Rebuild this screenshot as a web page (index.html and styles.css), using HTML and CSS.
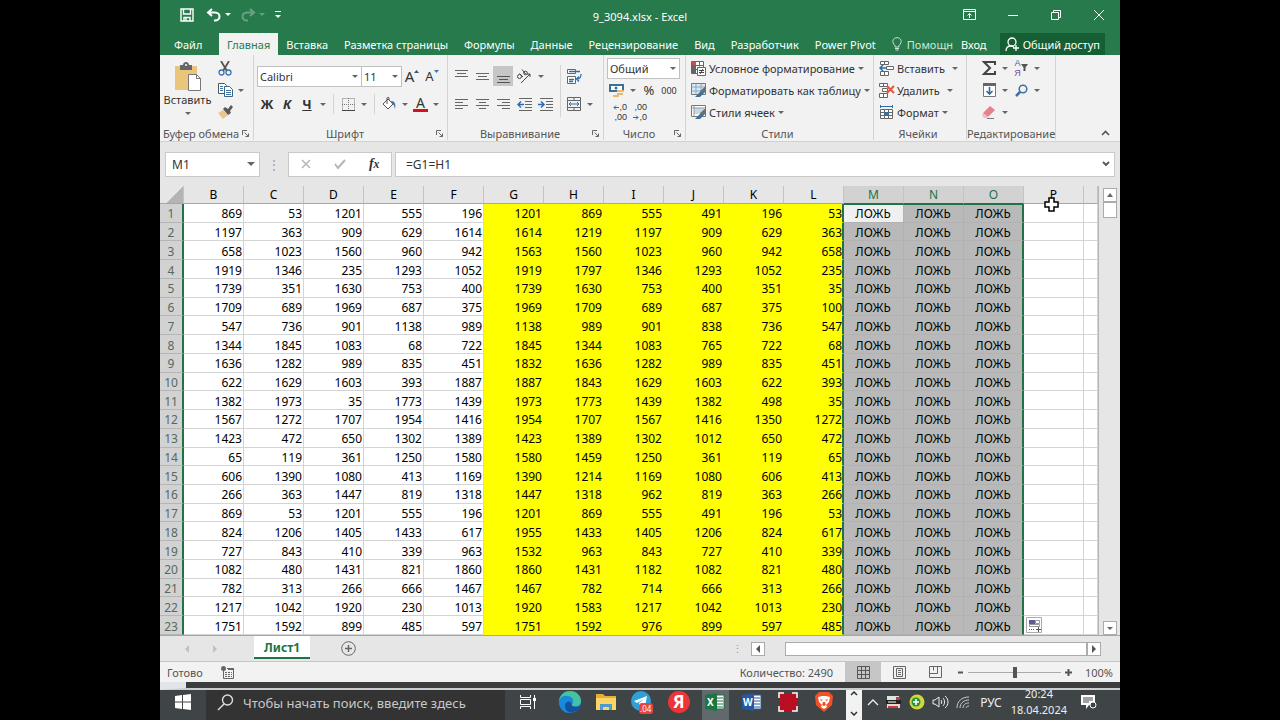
FILE: index.html
```html
<!DOCTYPE html>
<html lang="ru">
<head>
    <meta charset="UTF-8">
    <meta name="viewport" content="width=device-width, initial-scale=1.0">
    <title>9_3094.xlsx - Excel</title>
    <link rel="stylesheet" href="styles.css">
</head>
<body>
    <div class="screen">
        <!-- Заголовок окна -->
        <header class="titlebar">
            <div class="quick">
                <button aria-label="Сохранить"><svg width="14" height="14" viewBox="0 0 14 14" fill="none" stroke="#fff" stroke-width="1.4"><path d="M1 1h12v12H1z M3.500 1v5h7V1 M4 13V9.500h6V13 M6 10v3"/></svg></button>
                <button aria-label="Отменить"><svg width="16" height="14" viewBox="0 0 16 14" fill="none" stroke="#fff" stroke-width="2"><path d="M6 1L2 4.500 6 8 M2 4.500h7c6 0 6 8 0 8H8"/></svg></button>
                <span class="caret light"></span>
                <button class="dim" aria-label="Вернуть"><svg width="16" height="14" viewBox="0 0 16 14" fill="none" stroke="#fff" stroke-width="2"><path d="M10 1l4 3.500L10 8 M14 4.500H7c-6 0-6 8 0 8h1"/></svg></button>
                <span class="caret light dim"></span>
                <button aria-label="Настройка панели"><svg width="8" height="8" viewBox="0 0 8 8" fill="#fff"><path d="M1 0h6v1H1z M1 4h6L4 7z"/></svg></button>
            </div>
            <div class="title">9_3094.xlsx - Excel</div>
            <div class="wincontrols">
                <button aria-label="Параметры ленты"><svg width="13" height="11" viewBox="0 0 13 11" fill="none" stroke="#fff"><path d="M.5.5h12v10H.5z M.5 2.500h12 M6.500 9V4.500 M4.500 6.500l2-2 2 2"/></svg></button>
                <button aria-label="Свернуть"><svg width="10" height="10" viewBox="0 0 10 10" stroke="#fff"><path d="M0 5.500h10"/></svg></button>
                <button aria-label="Окно"><svg width="10" height="10" viewBox="0 0 10 10" fill="none" stroke="#fff"><path d="M.5 2.500h7v7h-7z M2.500 2V.5h7v7H8"/></svg></button>
                <button aria-label="Закрыть"><svg width="10" height="10" viewBox="0 0 10 10" stroke="#fff"><path d="M0 0l10 10 M10 0L0 10"/></svg></button>
            </div>
        </header>

        <!-- Вкладки ленты -->
        <nav class="tabs">
            <a href="#" class="file">Файл</a>
            <a href="#" class="active">Главная</a>
            <a href="#">Вставка</a>
            <a href="#">Разметка страницы</a>
            <a href="#">Формулы</a>
            <a href="#">Данные</a>
            <a href="#">Рецензирование</a>
            <a href="#">Вид</a>
            <a href="#">Разработчик</a>
            <a href="#">Power Pivot</a>
            <a href="#" class="help"><svg width="10" height="14" viewBox="0 0 10 14" fill="none" stroke="#cfe5d8"><path d="M3 10V8.500C-1 5 1 .7 5 .7S11 5 7 8.500V10z M3 11.500h4 M3.500 13h3"/></svg>Помощн</a>
            <a href="#" class="signin">Вход</a>
            <a href="#" class="share"><svg width="15" height="15" viewBox="0 0 15 15" fill="none" stroke="#fff" stroke-width="1.300"><circle cx="7" cy="5" r="4"/><path d="M1 14c0-3 2-5 5-5l3 1 M11 8v6 M8 11h6"/></svg>Общий доступ</a>
        </nav>

        <!-- Лента -->
        <section class="ribbon">
            <div class="group">
                <div class="body clip">
                    <button class="paste">
                        <svg width="28" height="30" viewBox="0 0 28 30"><path d="M1 4h22v24H1z" fill="#ecc57c"/><path d="M6 3h3c0-4 6-4 6 0h3v5H6z" fill="#666"/><circle cx="12" cy="3" r="1" fill="#fff"/><path d="M14.500 12.500h8l4 4v12h-12z" fill="#fff" stroke="#777"/><path d="M22.500 12.500v4h4" fill="none" stroke="#777"/></svg>
                        Вставить
                        <span class="caret"></span>
                    </button>
                    <div class="stack">
                        <div class="line"><button aria-label="Вырезать"><svg width="14" height="15" viewBox="0 0 14 15" fill="none"><path d="M3 0l6 10 M11 0L5 10" stroke="#555" stroke-width="1.800"/><circle cx="3.500" cy="11.500" r="2.500" stroke="#3f74a8" stroke-width="1.300"/><circle cx="10.500" cy="11.500" r="2.500" stroke="#3f74a8" stroke-width="1.300"/></svg></button></div>
                        <div class="line"><button aria-label="Копировать"><svg width="15" height="14" viewBox="0 0 15 14" fill="#fff" stroke="#555"><path d="M.5.5h6l2 2v8h-8z"/><path d="M6.500 3.500h5l3 3v7h-8z" stroke="#3d6385"/><path d="M2 3.500h3 M2 5.500h3 M2 7.500h3 M8 7.500h5 M8 9.500h5 M8 11.500h5" stroke="#3f74a8"/></svg></button><span class="caret"></span></div>
                        <div class="line"><button aria-label="Формат по образцу"><svg width="15" height="14" viewBox="0 0 15 14"><path d="M0 8l5-3 5 5-5 4z" fill="#ecc48c"/><path d="M5 4l2-2 3 2 3-4 2 2-3 4 1 2-3 2z" fill="#595959"/></svg></button></div>
                    </div>
                </div>
                <div class="caption"><span>Буфер обмена</span><svg width="7" height="7" viewBox="0 0 7 7" fill="none" stroke="#666"><path d="M.5 5V.5H5 M2.500 2.500l4 4 M6.500 3.500v3h-3"/></svg></div>
            </div>

            <div class="group">
                <div class="body two">
                    <div class="line">
                        <span class="combo wide"><select aria-label="Шрифт"><option>Calibri</option></select><i class="caret"></i></span>
                        <span class="combo size"><select aria-label="Размер шрифта"><option>11</option></select><i class="caret"></i></span>
                        <button class="grow" aria-label="Увеличить шрифт"><span>A</span><svg width="5" height="12" viewBox="0 0 5 12"><path d="M0 3l2.500-3L5 3z" fill="#44546a"/></svg></button>
                        <button class="grow small" aria-label="Уменьшить шрифт"><span>A</span><svg width="5" height="12" viewBox="0 0 5 12"><path d="M0 0h5L2.500 3z" fill="#3f74a8"/></svg></button>
                    </div>
                    <div class="line">
                        <button class="b">Ж</button><button class="b i">К</button><button class="b u">Ч</button><span class="caret"></span>
                        <span class="vsep"></span>
                        <button aria-label="Границы"><svg width="13" height="13" viewBox="0 0 13 13" fill="none" stroke="#777"><path d="M.5.5h12v12H.5z M6.500 0v13 M0 6.500h13" stroke-dasharray="1 1"/><path d="M0 12.500h13" stroke="#444"/></svg></button><span class="caret"></span>
                        <span class="vsep"></span>
                        <button aria-label="Цвет заливки"><svg width="15" height="14" viewBox="0 0 15 14" fill="none" stroke="#555"><path d="M1 7l5-5 5 5-5 5z" fill="#fff"/><path d="M5 7V1c0-1 2-1 2 0v2"/><path d="M9 4c4 0 5 3 4 8-1-3-1-5-3-5z" fill="#3f74a8" stroke="none"/></svg></button><span class="caret"></span>
                        <button class="color" aria-label="Цвет текста">A</button><span class="caret"></span>
                    </div>
                </div>
                <div class="caption"><span>Шрифт</span><svg width="7" height="7" viewBox="0 0 7 7" fill="none" stroke="#666"><path d="M.5 5V.5H5 M2.500 2.500l4 4 M6.500 3.500v3h-3"/></svg></div>
            </div>

            <div class="group">
                <div class="body split">
                    <div class="two">
                        <div class="line tight">
                            <button aria-label="По верхнему краю"><svg width="13" height="13" viewBox="0 0 13 13" stroke="#666"><path d="M0 .5h13 M2 3.500h9 M0 6.500h13"/></svg></button>
                            <button aria-label="По середине"><svg width="13" height="13" viewBox="0 0 13 13" stroke="#666"><path d="M0 3.500h13 M2 6.500h9 M0 9.500h13"/></svg></button>
                            <button class="on" aria-label="По нижнему краю"><svg width="13" height="13" viewBox="0 0 13 13" stroke="#555"><path d="M0 6.500h13 M2 9.500h9 M0 12.500h13"/></svg></button>
                            <button aria-label="Ориентация"><svg width="16" height="15" viewBox="0 0 16 15" fill="none" stroke="#444"><path d="M5 14L14 5 M11 5h3v3"/><circle cx="3.500" cy="7.500" r="2"/><path d="M3.500 4.500l3.500 3.500 M6 .5l4 5"/><circle cx="9.500" cy="4" r="1.800"/></svg></button><span class="caret"></span>
                        </div>
                        <div class="line tight">
                            <button aria-label="По левому краю"><svg width="13" height="11" viewBox="0 0 13 11" stroke="#666"><path d="M0 .5h13 M0 3.500h8 M0 6.500h13 M0 9.500h8"/></svg></button>
                            <button aria-label="По центру"><svg width="13" height="11" viewBox="0 0 13 11" stroke="#666"><path d="M0 .5h13 M3 3.500h7 M0 6.500h13 M3 9.500h7"/></svg></button>
                            <button aria-label="По правому краю"><svg width="13" height="11" viewBox="0 0 13 11" stroke="#666"><path d="M0 .5h13 M5 3.500h8 M0 6.500h13 M5 9.500h8"/></svg></button>
                            <button aria-label="Уменьшить отступ"><svg width="15" height="13" viewBox="0 0 15 13" fill="none" stroke="#666"><path d="M2 .5h13 M8 3.500h7 M8 6.500h7 M8 9.500h7 M2 12.500h13"/><path d="M7 6.500H1 M4 3.500l-3 3 3 3" stroke="#2f6cab" stroke-width="1.500"/></svg></button>
                            <button aria-label="Увеличить отступ"><svg width="15" height="13" viewBox="0 0 15 13" fill="none" stroke="#666"><path d="M2 .5h13 M8 3.500h7 M8 6.500h7 M8 9.500h7 M2 12.500h13"/><path d="M0 6.500h6 M3 3.500l3 3-3 3" stroke="#2f6cab" stroke-width="1.500"/></svg></button>
                        </div>
                    </div>
                    <span class="vsep tall"></span>
                    <div class="two">
                        <div class="line"><button aria-label="Перенести текст"><svg width="15" height="15" viewBox="0 0 15 15" fill="#fff" stroke="#666"><path d="M.5.5h8v4h-8z M.5 7.500h8v7h-8z"/><path d="M2 2.500h11 M2 10.500h5 M2 12.500h4 M14 5c0 4-1 5-4 5 M12 7.500L9.500 10l2.500 2.500" fill="none" stroke="#2f6cab" stroke-width="1.300"/></svg></button></div>
                        <div class="line"><button aria-label="Объединить"><svg width="14" height="14" viewBox="0 0 14 14" fill="none" stroke="#666"><path d="M.5.5h13v13H.5z M.5 3.500h13 M.5 10.500h13 M7 .5v3 M7 10.500v3"/><path d="M2 7h10 M4 5L2 7l2 2 M10 5l2 2-2 2" stroke="#2f6cab"/></svg></button><span class="caret"></span></div>
                    </div>
                </div>
                <div class="caption"><span>Выравнивание</span><svg width="7" height="7" viewBox="0 0 7 7" fill="none" stroke="#666"><path d="M.5 5V.5H5 M2.500 2.500l4 4 M6.500 3.500v3h-3"/></svg></div>
            </div>

            <div class="group">
                <div class="body three">
                    <div class="line"><span class="combo number"><select aria-label="Числовой формат"><option>Общий</option></select><i class="caret"></i></span></div>
                    <div class="line">
                        <button aria-label="Финансовый формат"><svg width="16" height="15" viewBox="0 0 16 15"><path d="M1 2h13v6H1z" fill="#fff" stroke="#3d7093" stroke-width="2"/><circle cx="7" cy="5" r="1.500" fill="#3d7093"/><path d="M8 7h7v2H8z M8 10h6v2H8z M4 12h6v2H4z" fill="#e8b96b"/></svg></button><span class="caret"></span>
                        <button class="pct">%</button><button class="zeros">000</button>
                    </div>
                    <div class="line">
                        <button class="dec" aria-label="Увеличить разрядность"><span><svg width="6" height="5" viewBox="0 0 6 5" fill="none" stroke="#2f6cab"><path d="M6 2.500H1 M3 .5l-2 2 2 2"/></svg>,0</span><span>,00</span></button>
                        <button class="dec" aria-label="Уменьшить разрядность"><span>,00</span><span><svg width="6" height="5" viewBox="0 0 6 5" fill="none" stroke="#2f6cab"><path d="M0 2.500h5 M3 .5l2 2-2 2"/></svg>,0</span></button>
                    </div>
                </div>
                <div class="caption"><span>Число</span><svg width="7" height="7" viewBox="0 0 7 7" fill="none" stroke="#666"><path d="M.5 5V.5H5 M2.500 2.500l4 4 M6.500 3.500v3h-3"/></svg></div>
            </div>

            <div class="group">
                <div class="body three">
                    <div class="line"><button class="cmd"><svg width="16" height="15" viewBox="0 0 16 15"><path d="M.5.5h12v12H.5z M.5 4.500h12 M.5 8.500h6 M4.500.5v12 M8.500.5v5" fill="#fff" stroke="#666"/><path d="M1 1h4v3H1z" fill="#c5544a"/><path d="M1 5h3v7H1z" fill="#666"/><path d="M6.500 6.500h8v8h-8z" fill="#fff" stroke="#666"/><path d="M8 9.500h5 M8 11.500h5 M12 8l-3 5" stroke="#444"/></svg>Условное форматирование<span class="caret"></span></button></div>
                    <div class="line"><button class="cmd"><svg width="16" height="15" viewBox="0 0 16 15"><path d="M.5.5h14v11H.5z" fill="#d9e8f4" stroke="#777"/><path d="M.5 4h14 M.5 8h14 M5 .5v11 M10 .5v11" stroke="#86a9c6"/><path d="M15 3v5l-6 6H4l4-4z" fill="#3d6f99"/><path d="M15 3v4l-4 3-2-2z" fill="#707070"/></svg>Форматировать как таблицу<span class="caret"></span></button></div>
                    <div class="line"><button class="cmd"><svg width="16" height="15" viewBox="0 0 16 15"><path d="M.5.5h14v11H.5z" fill="#fff" stroke="#777"/><path d="M3 3h10v6H3z" fill="#c2d9ea"/><path d="M.5 3h14 M3 .5v11" stroke="#999"/><path d="M15 3v5l-6 6H4l4-4z" fill="#3d6f99"/><path d="M15 3v4l-4 3-2-2z" fill="#707070"/></svg>Стили ячеек<span class="caret"></span></button></div>
                </div>
                <div class="caption"><span>Стили</span></div>
            </div>

            <div class="group">
                <div class="body three">
                    <div class="line"><button class="cmd cells"><svg width="16" height="15" viewBox="0 0 16 15" fill="#fff" stroke="#666"><path d="M1.500.5h8v3h-8z M5.500.5v3 M1.500 10.500h8v4h-8z M5.500 10.500v4 M7.500 5.500h7v3h-7z"/><path d="M8 7H1 M4 4L1 7l3 3" fill="none" stroke="#2f6cab" stroke-width="1.500"/></svg>Вставить<span class="caret far"></span></button></div>
                    <div class="line"><button class="cmd cells"><svg width="16" height="15" viewBox="0 0 16 15" fill="#fff" stroke="#666"><path d="M.5.5h8v3h-8z M4.500.5v3 M.5 10.500h8v4h-8z M4.500 10.500v4 M3.500 5.500h5v3h-5z"/><path d="M8 3l7 7 M15 3l-7 7" fill="none" stroke="#dd5b3e" stroke-width="2"/></svg>Удалить<span class="caret far"></span></button></div>
                    <div class="line"><button class="cmd cells"><svg width="16" height="15" viewBox="0 0 16 15" fill="#fff" stroke="#666"><path d="M1.500 4.500h12v9h-12z M1.500 7.500h12 M1.500 10.500h12 M5.500 4.500v9 M9.500 4.500v9"/><path d="M5 7h5v4H5z" fill="#3d6f99" stroke="none"/><path d="M1 1.500h13 M1.500 0v3 M13.500 0v3" stroke="#2f6cab"/></svg>Формат<span class="caret"></span></button></div>
                </div>
                <div class="caption"><span>Ячейки</span></div>
            </div>

            <div class="group">
                <div class="body three edit">
                    <div class="line">
                        <button aria-label="Сумма"><svg width="15" height="14" viewBox="0 0 15 14" fill="none" stroke="#444" stroke-width="2"><path d="M13 4V1H2l6 6-6 6h11v-3"/></svg></button><span class="caret"></span>
                        <button class="sort"><span>А<br><b>Я</b></span><svg width="7" height="8" viewBox="0 0 7 8" fill="#555"><path d="M0 0h7L4.500 3.500V7h-2V3.500z"/></svg></button><span class="caret"></span>
                    </div>
                    <div class="line">
                        <button aria-label="Заполнить"><svg width="13" height="14" viewBox="0 0 13 14" fill="none"><path d="M.5.5h12v13H.5z" fill="#fff" stroke="#777"/><path d="M0 0h13v3H0z" fill="#666"/><path d="M6.500 4v7 M3.500 8l3 3 3-3" stroke="#2f6cab" stroke-width="1.600"/></svg></button><span class="caret"></span>
                        <button aria-label="Найти"><svg width="13" height="13" viewBox="0 0 13 13" fill="none" stroke="#3d70a0"><circle cx="8" cy="5" r="3.800" stroke-width="1.500"/><path d="M5 8l-4 4" stroke-width="2.500"/></svg></button><span class="caret"></span>
                    </div>
                    <div class="line">
                        <button aria-label="Очистить"><svg width="14" height="13" viewBox="0 0 14 13"><path d="M8 0l5 4-7 7-5-4z" fill="#e4828e"/><path d="M1 7l5 4-1 1H2L0 9z" fill="#f3b9bf"/><path d="M5 12.500h7" stroke="#777"/></svg></button><span class="caret"></span>
                    </div>
                </div>
                <div class="caption"><span>Редактирование</span></div>
            </div>
            <div class="group last"><button aria-label="Свернуть ленту"><svg width="9" height="6" viewBox="0 0 9 6" fill="none" stroke="#555" stroke-width="1.600"><path d="M1 5l3.500-3.500L8 5"/></svg></button></div>
        </section>

        <!-- Строка формул -->
        <section class="formulabar">
            <span class="namebox"><input type="text" value="M1" aria-label="Имя ячейки"><i class="caret big"></i></span>
            <span class="dots">⋮</span>
            <span class="fxbox">
                <button aria-label="Отмена"><svg width="10" height="10" viewBox="0 0 10 10" stroke="#b5b5b5" stroke-width="1.500"><path d="M1 1l8 8 M9 1L1 9"/></svg></button>
                <button aria-label="Ввод"><svg width="12" height="10" viewBox="0 0 12 10" fill="none" stroke="#b5b5b5" stroke-width="2"><path d="M1 5l3 4 7-8"/></svg></button>
                <button class="fx">f<small>x</small></button>
            </span>
            <span class="formula"><input type="text" value="=G1=H1" aria-label="Формула"><svg width="8" height="6" viewBox="0 0 8 6" fill="none" stroke="#555" stroke-width="1.800"><path d="M1 1l3 3 3-3"/></svg></span>
        </section>

        <!-- Лист -->
        <main class="sheet">
            <table class="grid">
                <colgroup><col class="rowcol"><col span="15" class="datacol"><col></colgroup>
                <thead><tr id="letters"></tr></thead>
                <tbody id="cells"></tbody>
            </table>
            <div class="vscroll">
                <button aria-label="Вверх"><i class="caret up"></i></button>
                <span class="thumb"></span>
                <button class="down" aria-label="Вниз"><i class="caret"></i></button>
            </div>
        </main>

        <div class="sheetbar">
            <div class="sheetnav"><i class="arrow left pale"></i><i class="arrow pale"></i></div>
            <a href="#" class="sheettab">Лист1</a>
            <button class="add" aria-label="Новый лист"><svg width="15" height="15" viewBox="0 0 15 15" fill="none" stroke="#666"><circle cx="7.500" cy="7.500" r="6.800"/><path d="M7.500 4v7 M4 7.500h7" stroke-width="1.500"/></svg></button>
            <span class="dots">⋮</span>
            <div class="hscroll">
                <button aria-label="Влево"><i class="arrow left"></i></button>
                <span class="thumb"></span>
                <button aria-label="Вправо"><i class="arrow"></i></button>
            </div>
        </div>

        <footer class="status">
            <span>Готово</span>
            <svg width="13" height="13" viewBox="0 0 13 13" fill="none" stroke="#666"><path d="M2.500 4v8.500h10v-10H6"/><path d="M7 3h6" stroke-width="2"/><path d="M4 6.500h7 M4 8.500h7 M4 10.500h7" stroke-dasharray="2 1"/><circle cx="2.500" cy="2.500" r="2.500" fill="#666" stroke="none"/></svg>
            <span class="count">Количество: 2490</span>
            <button class="view on" aria-label="Обычный"><svg width="13" height="13" viewBox="0 0 13 13" fill="none" stroke="#555"><path d="M.5.5h12v12H.5z M.5 4.500h12 M.5 8.500h12 M4.500.5v12 M8.500.5v12"/></svg></button>
            <button class="view" aria-label="Разметка страницы"><svg width="13" height="13" viewBox="0 0 13 13" fill="none" stroke="#666"><path d="M.5.5h12v12H.5z M3.500 2.500h6v8h-6z M5 4.500h3 M5 6.500h3 M5 8.500h3"/></svg></button>
            <button class="view" aria-label="Страничный режим"><svg width="13" height="12" viewBox="0 0 13 12" fill="none" stroke="#666"><path d="M.5.5h12v11H.5z M.5 7.500h8v-7 M4.500.5v4"/></svg></button>
            <svg class="sign" width="7" height="7" viewBox="0 0 7 7" stroke="#555" stroke-width="2"><path d="M1 3.500h5"/></svg>
            <input type="range" class="zoom" min="0" max="100" value="50" aria-label="Масштаб">
            <svg class="sign" width="7" height="7" viewBox="0 0 7 7" stroke="#555" stroke-width="2"><path d="M0 3.500h7 M3.500 0v7"/></svg>
            <span class="percent">100%</span>
        </footer>

        <div class="behind"></div>

        <!-- Панель задач -->
        <div class="taskbar">
            <button class="start" aria-label="Пуск"><svg width="16" height="16" viewBox="0 0 16 16" fill="#fff"><path d="M0 2l7-1v6.500H0z M8 1l8-1v7.500H8z M0 8.500h7V15l-7-1z M8 8.500h8V16l-8-1z"/></svg></button>
            <label class="search"><svg width="17" height="17" viewBox="0 0 17 17" fill="none" stroke="#ddd" stroke-width="1.400"><circle cx="10.500" cy="6" r="5"/><path d="M7 10l-6 6"/></svg><input type="text" placeholder="Чтобы начать поиск, введите здесь"></label>
            <div class="apps">
                <button aria-label="Представление задач"><svg width="16" height="14" viewBox="0 0 16 14" fill="none" stroke="#fff"><path d="M.5 0v2.500h10V0 M.5 4.500h10v5H.5z M.5 14v-2.500h10V14 M14.500 0v14"/><path d="M13 3h3v3h-3z" fill="#fff" stroke="none"/></svg></button>
                <button aria-label="Edge"><svg width="24" height="24" viewBox="0 0 24 24"><circle cx="12" cy="12" r="11" fill="#1b78c9"/><path d="M1 11C2 4 7 1 12 1c7 0 11 5 11 10 0 4-3 6-8 5-2-1-1-2 0-3 0-4-8-7-14-2z" fill="#45c3a0"/><path d="M1 12C2 5 10 4 14 8c2 2 1 5 0 6-1-4-6-3-7 1-1 3 2 7 5 8C5 23 1 18 1 12z" fill="#1889dc"/><path d="M7 15c1-4 5-4 6-2 0 4 4 5 9 3-2 5-7 7-11 6-3-1-4-4-4-7z" fill="#14529c"/></svg></button>
                <button class="run" aria-label="Проводник"><svg width="20" height="18" viewBox="0 0 20 18"><path d="M0 1h7l2 2h11v14H0z" fill="#e8ad36"/><path d="M0 5h20v12H0z" fill="#fbd667"/><path d="M4 17v-6h12v6h-3v-3H7v3z" fill="#4b9bd1"/></svg></button>
                <button class="run" aria-label="Telegram"><svg width="24" height="24" viewBox="0 0 24 24"><circle cx="11" cy="11" r="10" fill="#2f9fd8"/><path d="M4 11l13-5-2 11-4-3-2 2v-3l5-4-7 4z" fill="#fff"/><rect x="9" y="13" width="14" height="11" rx="3" fill="#e8463c"/><text x="10" y="22" class="badge">.04</text></svg></button>
                <button aria-label="Яндекс"><svg width="24" height="24" viewBox="0 0 24 24"><circle cx="12" cy="12" r="11" fill="#ee3437"/><text x="6" y="18" class="ya">Я</text></svg></button>
                <button class="run current" aria-label="Excel"><svg width="20" height="18" viewBox="0 0 20 18"><path d="M10 2h9v14h-9z" fill="#fff" stroke="#217346"/><path d="M12 5h6 M12 8h6 M12 11h6 M12 14h6" stroke="#217346"/><path d="M0 2l12-2v18L0 16z" fill="#1b7742"/><text x="2" y="13" class="letter">X</text></svg></button>
                <button class="run" aria-label="Word"><svg width="20" height="18" viewBox="0 0 20 18"><path d="M10 2h9v14h-9z" fill="#fff" stroke="#2b579a"/><path d="M12 5h6 M12 8h6 M12 11h6 M12 14h6" stroke="#2b579a"/><path d="M0 2l12-2v18L0 16z" fill="#24599f"/><text x="1" y="13" class="letter">W</text></svg></button>
                <button aria-label="Снимок экрана"><svg width="20" height="20" viewBox="0 0 20 20"><path d="M1 1h18v18H1z" fill="#b90f23"/><path d="M1 6V1h5 M14 1h5v5 M19 14v5h-5 M6 19H1v-5" fill="none" stroke="#fff" stroke-width="1.500"/></svg></button>
                <button class="run" aria-label="Brave"><svg width="20" height="22" viewBox="0 0 20 22"><path d="M5 1h10l4 4-1 9-8 7-8-7-1-9z" fill="#f25126"/><path d="M4 6l4-1h4l4 1-1 5-3 3 1 2-3 2-3-2 1-2-3-3z" fill="#fff"/><path d="M6 8l3 1-2 1z M14 8l-3 1 2 1z M9 11h2l1 3-2 1-2-1z" fill="#f25126"/></svg></button>
            </div>
            <div class="spinner"><svg width="8" height="5" viewBox="0 0 8 5" fill="none" stroke="#333" stroke-width="1.500"><path d="M1 4l3-3 3 3"/></svg><svg width="8" height="5" viewBox="0 0 8 5" fill="none" stroke="#333" stroke-width="1.500"><path d="M1 1l3 3 3-3"/></svg></div>
            <div class="tray">
                <svg width="12" height="7" viewBox="0 0 12 7" fill="none" stroke="#eee" stroke-width="1.300"><path d="M1 6l5-5 5 5"/></svg>
                <svg width="16" height="14" viewBox="0 0 16 14"><path d="M1 1h12v4H1z" fill="#d8e8df"/><path d="M0 5h15v4H0z" fill="#222"/><path d="M2 7h8" stroke="#fff"/><path d="M1 9h13v4H1z" fill="#e9d7d7"/><path d="M10 2h4v3h-4z M2 11h10v2H2z" fill="#c33d3d"/></svg>
                <svg width="16" height="16" viewBox="0 0 16 16"><circle cx="8" cy="8" r="7.500" fill="#d5d63c"/><circle cx="7" cy="8" r="4.500" fill="#23963b"/><path d="M7 5v6 M4 8h6" stroke="#fff" stroke-width="1.600"/></svg>
                <svg width="17" height="14" viewBox="0 0 17 14" fill="none" stroke="#eee"><path d="M1 5h2l4-3v10L3 9H1z M9 5c1 1 1 3 0 4 M11 3c2 2 2 6 0 8 M13 1c4 3 4 9 0 12"/></svg>
                <svg width="14" height="14" viewBox="0 0 14 14" fill="none" stroke="#ccc"><path d="M1 13C1 6 6 2 13 2 M4 13c0-5 4-8 9-8 M7 13c0-3 2-5 6-5 M10 13c0-1 1-2 3-2"/></svg>
                <span class="lang">РУС</span>
                <span class="clock">20:24<br>18.04.2024</span>
                <svg width="17" height="16" viewBox="0 0 17 16"><path d="M1 1h14v10H9l-3 4v-4H1z" fill="#fff"/><path d="M3 4h10 M3 6h10 M3 8h6" stroke="#444"/><circle cx="13" cy="11" r="3" fill="#3d4245" stroke="#fff"/></svg>
            </div>
        </div>
    </div>
    <script src="script.js"></script>
</body>
</html>
```
FILE: styles.css
```css
* {
    box-sizing: border-box;
}
body {
    margin: 0;
    background: #000;
    font-family: "Noto Sans", "Open Sans", sans-serif;
    font-size: 11px;
    color: #333;
}
button, input, select {
    font: inherit;
    color: inherit;
    background: none;
    border: none;
    padding: 0;
    margin: 0;
    outline: none;
}
button {
    display: flex;
    align-items: center;
    justify-content: center;
}
svg {
    flex: none;
    display: block;
}
a {
    color: inherit;
    text-decoration: none;
}
.screen {
    width: 75%;
    height: 100vh;
    min-height: 500px;
    margin: 0 auto;
    display: flex;
    flex-direction: column;
    background: #e6e6e6;
    overflow: hidden;
}
.dim {
    opacity: .3;
}

/* Треугольные стрелки */
.caret {
    flex: none;
    width: 12px;
    display: flex;
    justify-content: center;
}
.caret::before {
    content: "";
    border: 3px solid transparent;
    border-top-color: #666;
    border-bottom-width: 0;
}
.caret.light::before {
    border-top-color: #fff;
}
.caret.big::before {
    border-width: 4px 4px 0;
}
.caret.up::before {
    border-width: 0 3px 4px;
    border-color: transparent transparent #666;
}
.arrow {
    border: 4px solid transparent;
    border-left-color: #555;
    border-right-width: 0;
}
.arrow.left {
    border-width: 4px 4px 4px 0;
    border-color: transparent #555 transparent transparent;
}
.arrow.pale {
    opacity: .25;
}

/* Заголовок */
.titlebar {
    flex: 0 0 33px;
    display: grid;
    grid-template-columns: 1fr auto 1fr;
    align-items: center;
    background: #267a4c;
    color: #fff;
}
.quick {
    display: flex;
    align-items: center;
    padding: 0 0 4px 20px;
}
.quick button {
    margin-right: 6px;
}
.quick button + .caret {
    margin: 0 6px 0 -6px;
}
.quick button:first-child {
    margin-right: 12px;
}
.wincontrols {
    display: flex;
    justify-content: flex-end;
    padding-bottom: 4px;
}
.wincontrols button {
    width: 43px;
}

/* Вкладки */
.tabs {
    flex: 0 0 22px;
    display: flex;
    background: #267a4c;
    color: #fff;
}
.tabs a {
    display: flex;
    align-items: center;
    flex: none;
    padding: 0 8px;
    white-space: nowrap;
}
.tabs .file {
    width: 59px;
    padding: 0 14px;
}
.tabs .active {
    background: #f2f2f2;
    color: #267a4c;
}
.tabs .help {
    gap: 5px;
    color: #cfe5d8;
}
.tabs .signin {
    padding: 0;
}
.tabs .share {
    gap: 3px;
    margin: 0 15px 0 auto;
    padding: 0 5px;
    background: #165f34;
}

/* Лента */
.ribbon {
    flex: 0 0 87px;
    display: grid;
    grid-template-columns: 94fr 194fr 156fr 82fr 188fr 93fr 89fr 64fr;
    background: #f2f2f2;
    border-bottom: 1px solid #d2d2d2;
    padding-bottom: 1px;
}
.group {
    display: flex;
    flex-direction: column;
    min-width: 0;
    border-right: 1px solid #d4d4d4;
}
.group.last {
    border: none;
    align-items: flex-end;
    justify-content: flex-end;
    padding: 0 10px 4px 0;
}
.body {
    flex: 1;
}
.caption {
    height: 14px;
    display: flex;
    align-items: center;
    padding-right: 4px;
    color: #555;
}
.caption span {
    flex: 1;
    text-align: center;
    white-space: nowrap;
}
.line {
    height: 22px;
    display: flex;
    align-items: center;
}
.line button {
    min-width: 20px;
    height: 20px;
}
.line.tight button {
    margin-right: 1px;
}
.two {
    display: flex;
    flex-direction: column;
    gap: 6px;
    padding: 10px 0 0 3px;
}
.three {
    padding: 2px 0 0 3px;
}
.split {
    display: flex;
}
.clip {
    display: flex;
    padding-top: 2px;
}
.paste {
    width: 55px;
    flex-direction: column;
    justify-content: flex-start;
    padding-top: 5px;
}
.paste .caret {
    margin-top: 5px;
}
.vsep {
    width: 1px;
    height: 20px;
    margin: 0 4px;
    background: #d4d4d4;
}
.vsep.tall {
    height: 52px;
    margin: 10px 0 0 4px;
}
.combo {
    height: 21px;
    display: flex;
    align-items: center;
    background: #fff;
    border: 1px solid #c0c0c0;
}
.combo select {
    flex: 1;
    min-width: 0;
    appearance: none;
    padding-left: 2px;
}
.combo.wide {
    width: 105px;
}
.combo.size {
    width: 40px;
    border-left: none;
}
.combo.number {
    width: 73px;
}
.grow span {
    font-size: 15px;
}
.grow.small span {
    font-size: 13px;
}
.b {
    font-size: 13px;
    font-weight: bold;
}
.i {
    font-style: italic;
}
.u {
    text-decoration: underline;
}
.line .color {
    height: 16px;
    min-width: 15px;
    margin: 0 2px;
    font-size: 14px;
    line-height: 12px;
    border-bottom: 3px solid #d3131b;
}
.on {
    background: #c6c6c6;
}
.pct {
    font-size: 13px;
}
.zeros {
    font-size: 9px;
}
.line .dec {
    flex-direction: column;
    align-items: flex-end;
    font-family: "Liberation Sans", sans-serif;
    font-size: 9px;
    line-height: 10px;
}
.dec span {
    display: flex;
    align-items: center;
}
.cmd {
    gap: 2px;
    padding-left: 2px;
    white-space: nowrap;
}
.cmd .caret {
    width: 8px;
}
.cells .far {
    margin-left: 4px;
}
.edit {
    padding-left: 12px;
}
.sort span {
    font-family: "Liberation Sans", sans-serif;
    font-size: 9px;
    line-height: 10px;
    color: #2f6cab;
}
.sort b {
    font-weight: normal;
    color: #7c4c9c;
}

/* Строка формул */
.formulabar {
    flex: 0 0 44px;
    display: flex;
    align-items: center;
    padding: 0 5px;
    font-size: 12px;
}
.namebox, .fxbox, .formula {
    height: 25px;
    display: flex;
    align-items: center;
    background: #fff;
    border: 1px solid #c9c9c9;
}
.namebox {
    width: 95px;
    padding: 0 2px 0 6px;
}
.namebox input {
    flex: 1;
    min-width: 0;
}
.dots {
    width: 28px;
    text-align: center;
    color: #999;
}
.fxbox {
    width: 104px;
    justify-content: space-around;
}
.fx {
    font: italic bold 14px "Liberation Serif", serif;
}
.formula {
    flex: 1;
    margin-left: 3px;
    padding: 0 4px 0 10px;
}
.formula input {
    flex: 1;
    min-width: 0;
}

/* Таблица */
.sheet {
    flex: 1;
    min-height: 0;
    display: flex;
    border-bottom: 1px solid #a6a6a6;
}
.grid {
    flex: 1;
    width: 0;
    height: 100%;
    table-layout: fixed;
    border-collapse: separate;
    border-spacing: 0;
    background: #fff;
    color: #000;
    font-size: 12px;
    line-height: 15px;
    border-right: 1px solid #b5b5b5;
}
.rowcol {
    width: 24px;
}
.datacol {
    width: 60px;
}
.grid th, .grid td {
    padding: 2px 0 0;
    font-weight: normal;
    border-right: 1px solid #d4d4d4;
    border-bottom: 1px solid #d4d4d4;
}
.grid td {
    text-align: right;
    padding-right: 1px;
}
.grid thead th {
    position: relative;
    height: 18px;
    padding: 0;
    background: #e6e6e6;
    border-right-color: #c4c4c4;
    border-bottom-color: #a6a6a6;
}
.grid thead .picked {
    background: #d2d2d2;
    color: #217346;
    border-bottom-color: #217346;
    box-shadow: 0 1px #217346;
}
.grid tbody th {
    background: #d2d2d2;
    color: #56695e;
    border-right: 2px solid #217346;
    border-bottom-color: #b5b5b5;
}
.grid .corner {
    background: linear-gradient(135deg, #e6e6e6 60%, #b4b4b4 60%);
}
.grid .yellow {
    background: #ff0;
    border-color: #ff0;
}
.grid .edge {
    border-right: 2px solid #217346;
    padding-right: 0;
}
.grid .sel {
    background: #b9b9b9;
    border-bottom-color: #b2b2b2;
    border-right-color: #b2b2b2;
    text-align: center;
}
.grid .sel.edge {
    border-right-color: #217346;
}
.grid .first {
    background: #f0f0f0;
}
.grid .options {
    position: relative;
}
.options svg {
    position: absolute;
    left: 2px;
    bottom: 1px;
}
.cursor {
    position: absolute;
    left: 20px;
    top: 11px;
    z-index: 1;
}
.vscroll {
    width: 21px;
    padding: 2px 3px 0 4px;
    display: flex;
    flex-direction: column;
}
.vscroll button, .vscroll .thumb, .hscroll button, .hscroll .thumb {
    background: #fff;
    border: 1px solid #ababab;
}
.vscroll button {
    height: 14px;
}
.vscroll .thumb {
    height: 16px;
}
.vscroll .down {
    margin-top: auto;
}

/* Ярлыки листов */
.sheetbar {
    flex: 0 0 26px;
    display: flex;
    align-items: center;
    border-bottom: 1px solid #c6c6c6;
}
.sheetnav {
    width: 94px;
    padding: 0 37px 0 25px;
    display: flex;
    justify-content: space-between;
}
.sheettab {
    align-self: flex-start;
    height: 23px;
    padding: 3px 10px 0;
    background: #fff;
    border-bottom: 2px solid #217346;
    color: #217346;
    font-size: 12px;
    font-weight: bold;
}
.add {
    margin: 0 auto 0 31px;
}
.hscroll {
    width: 350px;
    margin-right: 19px;
    display: flex;
}
.hscroll button {
    width: 14px;
    height: 14px;
}
.hscroll .thumb {
    flex: 1;
    margin-left: 20px;
}

/* Строка состояния */
.status {
    flex: 0 0 20px;
    display: flex;
    align-items: center;
    background: #f2f2f2;
    padding: 0 7px;
    color: #555;
}
.status > svg:first-of-type {
    margin-left: 18px;
}
.count {
    margin: 0 12px 0 auto;
}
.view {
    width: 36px;
    height: 20px;
}
.sign {
    margin: 0 4px;
}
.zoom {
    width: 93px;
    height: 12px;
    appearance: none;
    background: linear-gradient(#aaa, #aaa) center / 100% 1px no-repeat;
}
.zoom::-webkit-slider-thumb {
    appearance: none;
    width: 4px;
    height: 11px;
    background: #555;
}
.percent {
    width: 37px;
    text-align: right;
}
.behind {
    flex: 0 0 8px;
    background: #3b3d3e;
    border-bottom: 2px solid #c9cdd0;
    border-left: 26px solid #e2e4ea;
}

/* Панель задач */
.taskbar {
    flex: 0 0 30px;
    display: flex;
    background: #3f4447;
    color: #eee;
    overflow: hidden;
}
.start {
    width: 46px;
    padding-bottom: 6px;
}
.search {
    width: 299px;
    display: flex;
    align-items: center;
    gap: 9px;
    padding: 0 8px 5px 11px;
    background: #333;
    font-size: 13px;
}
.search input {
    flex: 1;
    min-width: 0;
}
.search input::placeholder {
    color: #c8c8c8;
    opacity: 1;
}
.apps {
    flex: 1;
    display: grid;
    grid-template-columns: 38px repeat(8, 1fr);
    padding: 0 3px 0 4px;
    column-gap: 9px;
}
.apps button {
    padding-bottom: 6px;
    border-bottom: 2px solid transparent;
}
.apps .run {
    border-bottom-color: #83b7e0;
}
.apps .current {
    background: #62696c;
}
.badge {
    font-size: 8px;
    fill: #fff;
}
.ya {
    font-size: 17px;
    font-weight: bold;
    fill: #fff;
}
.letter {
    font-size: 10px;
    font-weight: bold;
    fill: #fff;
}
.spinner {
    width: 16px;
    margin-left: 5px;
    padding: 1px 0 4px;
    display: flex;
    flex-direction: column;
    align-items: center;
    justify-content: space-between;
    background: #f2f2f2;
}
.tray {
    display: flex;
    align-items: center;
    gap: 7px;
    padding: 0 23px 6px 5px;
}
.lang {
    font-size: 12px;
    padding: 0 2px 0 3px;
}
.clock {
    margin-right: 6px;
    line-height: 16px;
    text-align: center;
}
```
FILE: script.js
```js
const letters = ['B', 'C', 'D', 'E', 'F', 'G', 'H', 'I', 'J', 'K', 'L', 'M', 'N', 'O', 'P', ''];
const rows = [
    '869 53 1201 555 196 1201 869 555 491 196 53',
    '1197 363 909 629 1614 1614 1219 1197 909 629 363',
    '658 1023 1560 960 942 1563 1560 1023 960 942 658',
    '1919 1346 235 1293 1052 1919 1797 1346 1293 1052 235',
    '1739 351 1630 753 400 1739 1630 753 400 351 35',
    '1709 689 1969 687 375 1969 1709 689 687 375 100',
    '547 736 901 1138 989 1138 989 901 838 736 547',
    '1344 1845 1083 68 722 1845 1344 1083 765 722 68',
    '1636 1282 989 835 451 1832 1636 1282 989 835 451',
    '622 1629 1603 393 1887 1887 1843 1629 1603 622 393',
    '1382 1973 35 1773 1439 1973 1773 1439 1382 498 35',
    '1567 1272 1707 1954 1416 1954 1707 1567 1416 1350 1272',
    '1423 472 650 1302 1389 1423 1389 1302 1012 650 472',
    '65 119 361 1250 1580 1580 1459 1250 361 119 65',
    '606 1390 1080 413 1169 1390 1214 1169 1080 606 413',
    '266 363 1447 819 1318 1447 1318 962 819 363 266',
    '869 53 1201 555 196 1201 869 555 491 196 53',
    '824 1206 1405 1433 617 1955 1433 1405 1206 824 617',
    '727 843 410 339 963 1532 963 843 727 410 339',
    '1082 480 1431 821 1860 1860 1431 1182 1082 821 480',
    '782 313 266 666 1467 1467 782 714 666 313 266',
    '1217 1042 1920 230 1013 1920 1583 1217 1042 1013 230',
    '1751 1592 899 485 597 1751 1592 976 899 597 485'
];

const cursor = '<svg class="cursor" width="16" height="16" viewBox="0 0 16 16"><path d="M5 1h5v4h4v5h-4v4H5v-4H1V5h4z" fill="#fff" stroke="#000" stroke-width="1.500"/></svg>';
const fillOptions = '<svg width="16" height="16" viewBox="0 0 16 16"><path d="M.5.5h15v15H.5z" fill="#fff" stroke="#aaa"/><path d="M3 3h6v4H3z" fill="#5b5b9c"/><path d="M9.500 3.500h4v3h-4z M3.500 7.500h10v2h-10z" fill="none" stroke="#999"/><path d="M3 12.500h6" stroke="#555" stroke-dasharray="1 1"/><path d="M12.500 10v5 M10 12.500h5" stroke="#555"/></svg>';

let head = '<th class="corner"></th>';
letters.forEach(letter => {
    const picked = letter !== '' && 'MNO'.includes(letter);
    head += `<th${picked ? ' class="picked"' : ''}>${letter}${letter === 'P' ? cursor : ''}</th>`;
});
document.getElementById('letters').innerHTML = head;

let html = '';
rows.forEach((row, r) => {
    html += `<tr><th>${r + 1}</th>`;
    row.split(' ').forEach((value, c) => {
        const cls = c === 10 ? 'yellow edge' : c > 4 ? 'yellow' : '';
        html += `<td class="${cls}">${value}</td>`;
    });
    html += `<td class="sel${r === 0 ? ' first' : ''}">ЛОЖЬ</td><td class="sel">ЛОЖЬ</td><td class="sel edge">ЛОЖЬ</td>`;
    html += r === rows.length - 1 ? `<td class="options">${fillOptions}</td>` : '<td></td>';
    html += '<td></td></tr>';
});
document.getElementById('cells').innerHTML = html;
```
